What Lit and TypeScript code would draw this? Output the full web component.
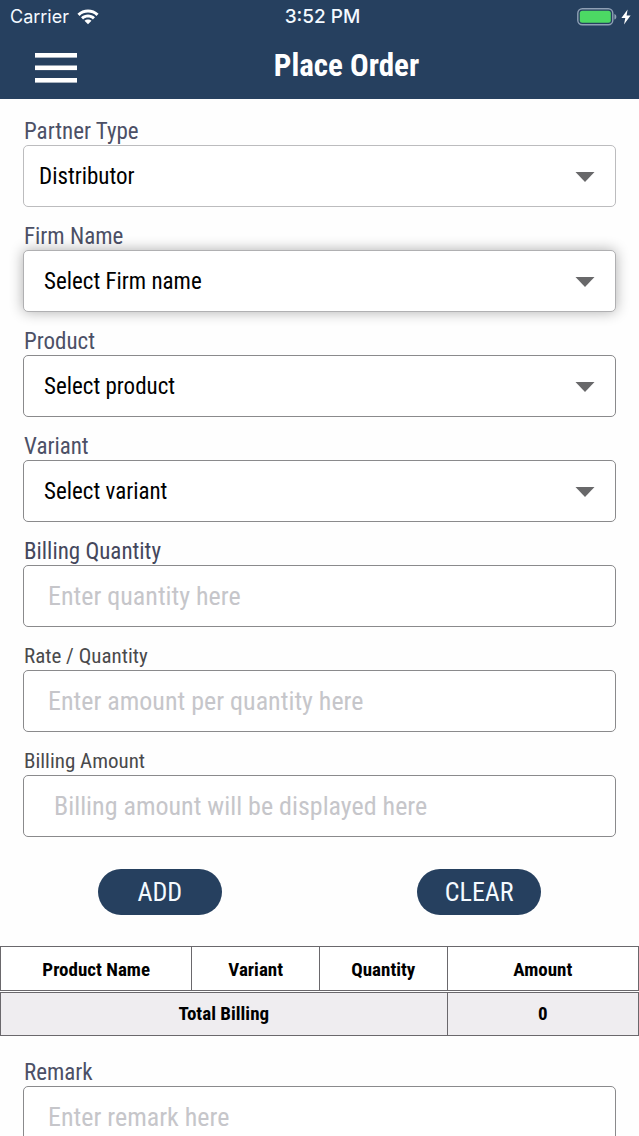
import { LitElement, html, css, svg } from "lit";
import { customElement, property } from "lit/decorators.js";
import { classMap } from "lit/directives/class-map.js";

type Field = {
  id: string;
  label: string;
  kind: "select" | "input";
  text: string;
  tone?: string;
};

const FIELDS: Field[] = [
  { id: "partner", label: "Partner Type", kind: "select", text: "Distributor", tone: "chosen" },
  { id: "firm", label: "Firm Name", kind: "select", text: "Select Firm name", tone: "raised" },
  { id: "product", label: "Product", kind: "select", text: "Select product" },
  { id: "variant", label: "Variant", kind: "select", text: "Select variant" },
  { id: "quantity", label: "Billing Quantity", kind: "input", text: "Enter quantity here", tone: "slate" },
  { id: "rate", label: "Rate / Quantity", kind: "input", text: "Enter amount per quantity here", tone: "plain" },
  { id: "amount", label: "Billing Amount", kind: "input", text: "Billing amount will be displayed here", tone: "computed" },
];

const REMARK: Field = { id: "remark", label: "Remark", kind: "input", text: "Enter remark here" };

@customElement("status-bar")
class StatusBar extends LitElement {
  static styles = css`
    :host {
      display: grid;
      grid-template-columns: 1fr auto 1fr;
      align-items: center;
      height: 33px;
      padding: 0 8px 0 10px;
      color: #f4faff;
      font: 18px/24px Inter, "Liberation Sans", sans-serif;
    }
    .side {
      display: flex;
      align-items: center;
      gap: 8px;
    }
    .right {
      justify-content: flex-end;
      gap: 4px;
    }
    .time {
      padding-left: 4px;
      font-size: 19px;
      font-weight: 500;
    }
    svg {
      display: block;
    }
  `;

  render() {
    return html`
      <div class="side">
        <span>Carrier</span>
        <svg width="22" height="16" viewBox="0 0 22 16" fill="#fff" aria-hidden="true">
          <path d="M0.4 4.7C6.2-1 15.8-1 21.6 4.7L19.4 6.9C14.8 2.5 7.2 2.5 2.6 6.9Z" />
          <path d="M4 8.3C7.9 4.5 14.1 4.5 18 8.3L15.9 10.4C13.2 7.8 8.8 7.8 6.1 10.4Z" />
          <path d="M7.5 11.8C9.4 9.9 12.6 9.9 14.5 11.8L11 15.3Z" />
        </svg>
      </div>
      <span class="time">3:52 PM</span>
      <div class="side right">
        <svg width="40" height="18" viewBox="0 0 40 18" aria-hidden="true">
          <rect x="0.8" y="0.8" width="35" height="16" rx="4.5" fill="none" stroke="#8fa0b5" stroke-width="1.4" />
          <rect x="2.8" y="2.8" width="31" height="12" rx="2.5" fill="#4cd964" />
          <path d="M37.4 6C40 6.8 40 10.8 37.4 11.6Z" fill="#8fa0b5" />
        </svg>
        <svg width="10" height="16" viewBox="0 0 10 16" fill="#fff" aria-hidden="true">
          <path d="M6.6 0.5L0.4 8.9H4.3L3 15.5L9.6 6.6H5.6Z" />
        </svg>
      </div>
    `;
  }
}

@customElement("order-field")
class OrderField extends LitElement {
  @property({ attribute: false }) field!: Field;

  static styles = css`
    :host {
      display: block;
      font-family: "Roboto Condensed", Roboto, sans-serif;
    }
    .label {
      display: block;
      width: fit-content;
      font-size: 23px;
      line-height: 28px;
      color: #4c5066;
      padding: 1px 0 0 1px;
      height: 27px;
    }
    .plain .label,
    .computed .label {
      font-size: 21px;
      line-height: 26px;
      color: #4a4a4c;
    }
    .slate .label {
      color: #44475c;
    }
    .box {
      display: grid;
      align-items: center;
    }
    .control,
    .arrow {
      grid-area: 1 / 1;
    }
    .arrow {
      justify-self: end;
      margin: 2px 21px 0 0;
      pointer-events: none;
    }
    .control {
      box-sizing: border-box;
      width: 100%;
      height: 62px;
      margin: 0;
      padding: 0 24px;
      border: 1px solid #8a8a8c;
      border-radius: 5px;
      background: #fff;
      color: #000;
      font-family: inherit;
      font-size: 26px;
      outline: none;
      appearance: none;
    }
    select.control {
      padding: 0 48px 0 20px;
      font-size: 23px;
    }
    .chosen .control {
      padding-left: 15px;
      border-color: #bcbcbe;
    }
    .raised .control {
      border-color: #b0b0b2;
      box-shadow: 0 0 14px rgba(0, 0, 0, 0.32);
    }
    .computed .control {
      padding-left: 30px;
    }
    .control::placeholder {
      color: #c6c6ca;
      opacity: 1;
    }
  `;

  render() {
    const f = this.field;
    const tone = f.tone ?? "standard";
    return html`
      <div class=${classMap({ [tone]: true })}>
        <label class="label" for=${f.id}>${f.label}</label>
        <div class="box">
          ${f.kind === "select"
            ? html`
                <select class="control" id=${f.id}>
                  <option>${f.text}</option>
                </select>
                <svg class="arrow" width="20" height="10" viewBox="0 0 20 10" aria-hidden="true">
                  <path d="M0.5 0H19.5L10 10Z" fill="#68686a" />
                </svg>
              `
            : html`<input
                class="control"
                id=${f.id}
                type="text"
                placeholder=${f.text}
                ?readonly=${f.id === "amount"}
              />`}
        </div>
      </div>
    `;
  }
}

@customElement("app-root")
class AppRoot extends LitElement {
  static styles = css`
    :host {
      display: flex;
      flex-direction: column;
      height: 100vh;
      background: #fefefe;
      font-family: "Roboto Condensed", Roboto, sans-serif;
    }
    .top {
      flex: none;
      background: #26405f;
    }
    .bar {
      display: grid;
      grid-template-columns: 1fr auto 1fr;
      align-items: center;
      height: 66px;
      padding: 0 31px;
    }
    .menu {
      justify-self: start;
      padding: 8px 4px 4px;
      border: 0;
      background: none;
    }
    .menu svg {
      display: block;
    }
    .title {
      margin: 0;
      padding-left: 54px;
      font-size: 31px;
      line-height: 36px;
      font-weight: 700;
      color: #fff;
    }
    .page {
      flex: 1;
      min-height: 0;
      overflow-y: auto;
      scrollbar-width: none;
    }
    .fields {
      display: grid;
      gap: 15px;
      padding: 18px 23px 0;
    }
    .actions {
      display: grid;
      grid-template-columns: 1fr 1fr;
      justify-items: center;
      padding: 32px 0 31px;
    }
    .action {
      width: 124px;
      height: 46px;
      padding: 0;
      border: 0;
      border-radius: 23px;
      background: #26405f;
      color: #f4faff;
      font-family: inherit;
      font-size: 26px;
      line-height: 46px;
    }
    .totals {
      width: 100%;
      table-layout: fixed;
      border-collapse: collapse;
      font-size: 19px;
      line-height: 24px;
      color: #000;
    }
    .wide {
      width: 30%;
    }
    .narrow {
      width: 20%;
    }
    .totals th,
    .totals td {
      height: 42px;
      padding: 0;
      border: 1px solid #6a686c;
      text-align: center;
      font-weight: 700;
    }
    .totals thead th {
      height: 41px;
      padding-top: 2px;
      border-bottom: 3px double #6a686c;
      background: #fff;
    }
    .totals tbody th,
    .totals tbody td {
      background: #efedf0;
    }
    .remark {
      padding: 22px 23px 24px;
    }
  `;

  render() {
    return html`
      <header class="top">
        <status-bar></status-bar>
        <div class="bar">
          <button class="menu" type="button" aria-label="Menu">
            <svg width="42" height="30" viewBox="0 0 42 30" fill="#fff">
              ${[0, 12.5, 25].map((y) => svg`<rect x="0" y=${y} width="42" height="4.6" />`)}
            </svg>
          </button>
          <h1 class="title">Place Order</h1>
        </div>
      </header>
      <main class="page">
        <div class="fields">
          ${FIELDS.map((f) => html`<order-field .field=${f}></order-field>`)}
        </div>
        <div class="actions">
          <button class="action" type="button">ADD</button>
          <button class="action" type="button">CLEAR</button>
        </div>
        <table class="totals">
          <colgroup>
            <col class="wide" />
            <col class="narrow" />
            <col class="narrow" />
            <col class="wide" />
          </colgroup>
          <thead>
            <tr>
              <th scope="col">Product Name</th>
              <th scope="col">Variant</th>
              <th scope="col">Quantity</th>
              <th scope="col">Amount</th>
            </tr>
          </thead>
          <tbody>
            <tr>
              <th scope="row" colspan="3">Total Billing</th>
              <td>0</td>
            </tr>
          </tbody>
        </table>
        <div class="remark">
          <order-field .field=${REMARK}></order-field>
        </div>
      </main>
    `;
  }
}
